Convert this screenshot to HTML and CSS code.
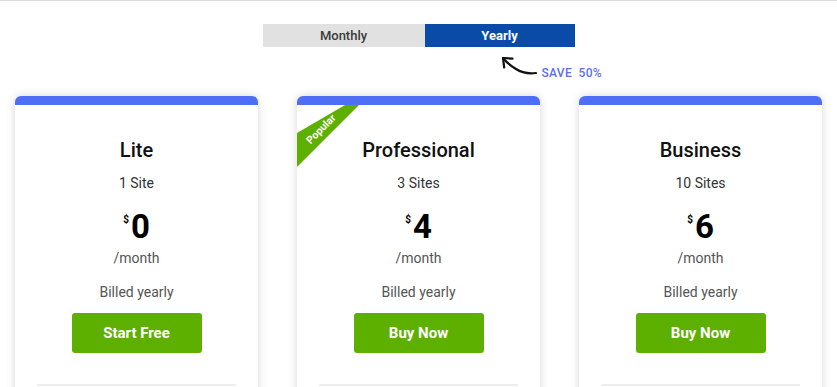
FILE: index.html
```html
<!DOCTYPE html>
<html>
<head>
<meta charset="utf-8">
<link rel="stylesheet" href="styles.css">
</head>
<body>
<div class="page">
  <div class="switch-area">
    <div class="toggle">
      <div class="opt opt-month">Monthly</div>
      <div class="opt opt-year">Yearly</div>
    </div>
    <div class="save">
      <svg class="arrow" width="38" height="22" viewBox="0 0 38 22">
        <path d="M36 18 C 28 19, 22 18, 16 14 C 11 11, 7 8, 3 3" fill="none" stroke="#111" stroke-width="2.2" stroke-linecap="round"/>
        <path d="M12.5 3.6 L3 3 L4.2 12.5" fill="none" stroke="#111" stroke-width="2.2" stroke-linecap="round" stroke-linejoin="round"/>
      </svg>
      <span class="save-text">SAVE&nbsp;&nbsp;50%</span>
    </div>
  </div>

  <div class="cards">
    <div class="card">
      <h2 class="title">Lite</h2>
      <div class="sites">1 Site</div>
      <div class="price"><span class="cur">$</span>0</div>
      <div class="per">/month</div>
      <div class="billed">Billed yearly</div>
      <a class="btn">Start Free</a>
      <div class="divider"></div>
    </div>
    <div class="card">
      <div class="ribbon"><span class="ribbon-text">Popular</span></div>
      <h2 class="title">Professional</h2>
      <div class="sites">3 Sites</div>
      <div class="price"><span class="cur">$</span>4</div>
      <div class="per">/month</div>
      <div class="billed">Billed yearly</div>
      <a class="btn">Buy Now</a>
      <div class="divider"></div>
    </div>
    <div class="card">
      <h2 class="title">Business</h2>
      <div class="sites">10 Sites</div>
      <div class="price"><span class="cur">$</span>6</div>
      <div class="per">/month</div>
      <div class="billed">Billed yearly</div>
      <a class="btn">Buy Now</a>
      <div class="divider"></div>
    </div>
  </div>
</div>
</body>
</html>
```

FILE: styles.css
```css
html, body {
  margin: 0;
  padding: 0;
  background: #fff;
  overflow: hidden;
}
body {
  font-family: Roboto, "Liberation Sans", Arial, sans-serif;
  color: #333;
}
.page {
  border-top: 1px solid #dcdcdc;
  height: 386px;
  overflow: hidden;
}
.switch-area {
  width: 312px;
  margin: 23px auto 0;
}
.toggle {
  display: flex;
  height: 23px;
}
.opt {
  display: flex;
  align-items: center;
  justify-content: center;
  font-size: 13px;
  font-weight: 500;
}
.opt-month {
  width: 162px;
  background: #e1e1e1;
  color: #3a3a3a;
}
.opt-year {
  width: 150px;
  background: #0b4ba8;
  color: #fff;
  font-weight: 700;
}
.save {
  display: flex;
  align-items: flex-end;
  margin-left: 237px;
  width: 130px;
  height: 30px;
}
.arrow {
  display: block;
  flex: none;
}
.save-text {
  font-size: 12px;
  font-weight: 500;
  letter-spacing: 0.3px;
  color: #5a6ff3;
  margin-left: 4px;
  margin-bottom: -3px;
  line-height: 14px;
  white-space: nowrap;
}
.cards {
  display: flex;
  justify-content: center;
  gap: 39px;
  margin-top: 19px;
}
.card {
  position: relative;
  width: 243px;
  height: 320px;
  background: #fff;
  border-top: 9px solid #4f6ef6;
  border-radius: 6px 6px 0 0;
  box-shadow: 0 0 10px rgba(0, 0, 0, 0.16);
  box-sizing: border-box;
  padding: 33px 22px 0;
  text-align: center;
  overflow: hidden;
}
.title {
  margin: 0;
  font-size: 20px;
  font-weight: 500;
  line-height: 24px;
  color: #111;
}
.sites {
  margin-top: 11px;
  font-size: 14px;
  line-height: 20px;
  color: #333;
}
.price {
  margin-top: 14px;
  font-size: 33px;
  font-weight: 700;
  line-height: 40px;
  color: #000;
}
.cur {
  font-size: 10px;
  vertical-align: top;
  position: relative;
  top: -7px;
  margin-right: 2px;
}
.per {
  margin-top: 1px;
  font-size: 14px;
  line-height: 20px;
  color: #555;
}
.billed {
  margin-top: 14px;
  font-size: 14px;
  line-height: 20px;
  color: #555;
}
.btn {
  display: flex;
  align-items: center;
  justify-content: center;
  width: 130px;
  height: 40px;
  margin: 11px auto 0;
  background: #5db000;
  color: #fff;
  border-radius: 3px;
  font-size: 15px;
  font-weight: 700;
}
.divider {
  margin-top: 31px;
  height: 2px;
  background: #ededed;
}
.ribbon {
  position: absolute;
  left: 0;
  top: 0;
  width: 64px;
  height: 72px;
  background: #5db000;
  clip-path: polygon(48px 0, 62px 0, 0 62px, 0 28px);
}
.ribbon-text {
  position: absolute;
  left: 24px;
  top: 24px;
  transform: translate(-50%, -50%) rotate(-45deg);
  font-size: 10.5px;
  font-weight: 700;
  color: #fff;
  white-space: nowrap;
}
```
